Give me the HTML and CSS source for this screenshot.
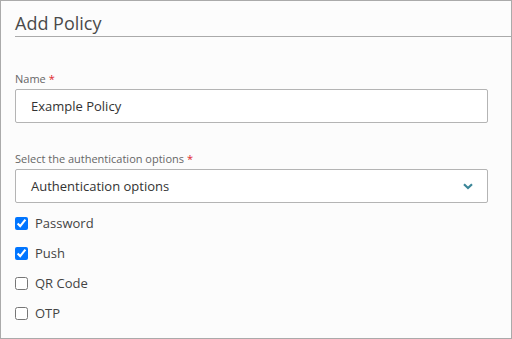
FILE: index.html
```html
<!DOCTYPE html>
<html>
<head>
<meta charset="utf-8">
<link rel="stylesheet" href="styles.css">
</head>
<body>
<div class="panel">
  <div class="header"><h1 class="title">Add Policy</h1></div>
  <form class="form">
    <label class="field-label">Name <span class="req">*</span></label>
    <div class="input">Example Policy</div>
    <label class="field-label second">Select the authentication options <span class="req">*</span></label>
    <div class="input select">
      <span>Authentication options</span>
      <svg class="chevron" width="10" height="7" viewBox="0 0 10 7"><path d="M1 1.2 L5 5 L9 1.2" fill="none" stroke="#3b8698" stroke-width="2.2"/></svg>
    </div>
    <div class="checks">
      <label class="check"><input type="checkbox" checked><span>Password</span></label>
      <label class="check"><input type="checkbox" checked><span>Push</span></label>
      <label class="check"><input type="checkbox"><span>QR Code</span></label>
      <label class="check"><input type="checkbox"><span>OTP</span></label>
    </div>
  </form>
</div>
</body>
</html>
```
FILE: styles.css
```css
* { box-sizing: border-box; }
html, body { margin: 0; padding: 0; }
body { font-family: "Open Sans", "Noto Sans", sans-serif; }
.panel {
  width: 512px;
  height: 339px;
  border: 1px solid #aaa;
  background: #fcfcfc;
  overflow: hidden;
}
.header {
  margin-left: 14px;
  height: 36px;
  border-bottom: 1px solid #aaa;
}
.title {
  margin: 0;
  padding-top: 9px;
  font-size: 18px;
  line-height: 26px;
  font-weight: 400;
  color: #4a4a4a;
}
.form {
  padding: 34px 23px 0 14px;
  display: flex;
  flex-direction: column;
}
.field-label {
  font-size: 11px;
  line-height: 15px;
  color: #666;
  margin-bottom: 3px;
}
.field-label.second { margin-top: 28px; }
.req { color: #e0242b; }
.input {
  height: 34px;
  border: 1px solid #b4b4b4;
  border-radius: 2px;
  background: #fff;
  padding: 0 14px 0 15px;
  display: flex;
  align-items: center;
  font-size: 13px;
  color: #333;
}
.select { justify-content: space-between; }
.checks { margin-top: 5px; display: flex; flex-direction: column; }
.check {
  height: 30px;
  display: flex;
  align-items: center;
  font-size: 13px;
  color: #444;
}
.check input {
  margin: 0 7px 0 0;
  width: 13px;
  height: 13px;
}
```
